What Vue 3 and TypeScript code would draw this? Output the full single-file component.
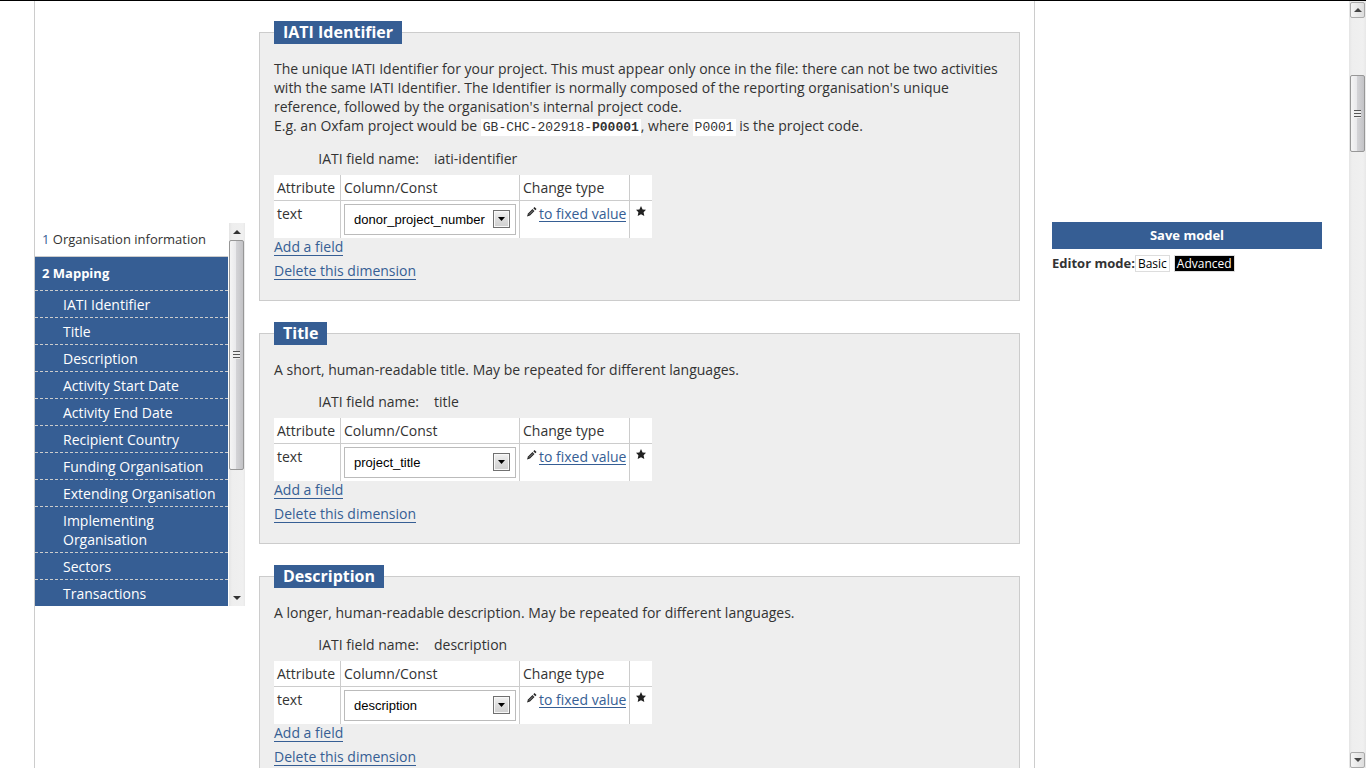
<script setup lang="ts">
import { ref } from 'vue'

interface Dimension {
  id: string
  title: string
  description: string
  field: string
}

const steps: string[] = [
  'IATI Identifier',
  'Title',
  'Description',
  'Activity Start Date',
  'Activity End Date',
  'Recipient Country',
  'Funding Organisation',
  'Extending Organisation',
  'Implementing Organisation',
  'Sectors',
  'Transactions',
]

const dimensions: Dimension[] = [
  {
    id: 'identifier',
    title: 'IATI Identifier',
    description:
      "The unique IATI Identifier for your project. This must appear only once in the file: there can not be two activities with the same IATI Identifier. The Identifier is normally composed of the reporting organisation's unique reference, followed by the organisation's internal project code.",
    field: 'iati-identifier',
  },
  {
    id: 'title',
    title: 'Title',
    description: 'A short, human-readable title. May be repeated for different languages.',
    field: 'title',
  },
  {
    id: 'description',
    title: 'Description',
    description: 'A longer, human-readable description. May be repeated for different languages.',
    field: 'description',
  },
]

const columns: string[] = ['donor_project_number', 'project_title', 'description']
const chosen = ref<string[]>([...columns])
const mode = ref<'Basic' | 'Advanced'>('Advanced')
</script>

<template>
  <div class="page">
    <div class="frame">
      <aside class="side">
        <nav class="steps" aria-label="Steps">
          <a class="step" href="#organisation"><span class="num">1</span> Organisation information</a>
          <a class="step current" href="#mapping">2 Mapping</a>
          <ul class="substeps">
            <li v-for="s in steps" :key="s"><a href="#mapping">{{ s }}</a></li>
          </ul>
        </nav>
        <div class="bar inner" aria-hidden="true">
          <span class="cap"><svg width="8" height="4" viewBox="0 0 8 4"><path d="M0 4L4 0L8 4Z" fill="#333" /></svg></span>
          <span class="thumb"><i class="grip"></i></span>
          <span class="cap end"><svg width="8" height="4" viewBox="0 0 8 4"><path d="M0 0L4 4L8 0Z" fill="#333" /></svg></span>
        </div>
      </aside>

      <main class="content">
        <fieldset v-for="(d, i) in dimensions" :key="d.id" class="dimension">
          <legend>{{ d.title }}</legend>
          <p class="about">{{ d.description }}</p>
          <p v-if="d.id === 'identifier'" class="example">
            E.g. an Oxfam project would be <code>GB-CHC-202918-<b>P00001</b></code>, where <code>P0001</code> is the project code.
          </p>
          <dl class="field">
            <dt>IATI field name:</dt>
            <dd>{{ d.field }}</dd>
          </dl>
          <table>
            <thead>
              <tr>
                <th class="c-attr">Attribute</th>
                <th class="c-col">Column/Const</th>
                <th class="c-type">Change type</th>
                <th class="c-star"></th>
              </tr>
            </thead>
            <tbody>
              <tr>
                <td><label :for="'col-' + d.id">text</label></td>
                <td class="pick">
                  <div class="select">
                    <select :id="'col-' + d.id" v-model="chosen[i]">
                      <option v-for="c in columns" :key="c" :value="c">{{ c }}</option>
                    </select>
                    <span class="arrow"><svg width="7" height="4" viewBox="0 0 7 4"><path d="M0 0H7L3.5 4Z" fill="#000" /></svg></span>
                  </div>
                </td>
                <td>
                  <span class="change">
                    <svg width="16" height="16" viewBox="0 0 16 16" aria-hidden="true">
                      <path d="M4 12.5L5 9.5L9.5 5L11.5 7L7 11.5Z" fill="#222" />
                      <path d="M10.3 4.2L11.5 3L13.5 5L12.3 6.2Z" fill="#222" />
                      <path d="M6 10.5L10 6.5" stroke="#aaa" stroke-width="0.8" />
                    </svg>
                    <a href="#fixed">to fixed value</a>
                  </span>
                </td>
                <td class="star">
                  <svg width="16" height="16" viewBox="0 0 16 16" aria-label="Required">
                    <path d="M8 2L9.6 5.4L13 5.8L10.6 8.2L11.3 12L8 10.3L4.7 12L5.4 8.2L3 5.8L6.4 5.4Z" fill="#222" />
                  </svg>
                </td>
              </tr>
            </tbody>
          </table>
          <div class="action"><a href="#add">Add a field</a></div>
          <div class="action"><a href="#delete">Delete this dimension</a></div>
        </fieldset>
      </main>
    </div>

    <aside class="tools">
      <button class="save" type="button">Save model</button>
      <div class="mode">
        <strong>Editor mode:</strong>
        <button type="button" :class="{ on: mode === 'Basic' }" @click="mode = 'Basic'">Basic</button>
        <button type="button" :class="{ on: mode === 'Advanced' }" @click="mode = 'Advanced'">Advanced</button>
      </div>
    </aside>

    <div class="bar outer" aria-hidden="true">
      <span class="cap"><svg width="8" height="4" viewBox="0 0 8 4"><path d="M0 4L4 0L8 4Z" fill="#444" /></svg></span>
      <span class="thumb"><i class="grip"></i></span>
      <span class="cap end"><svg width="8" height="4" viewBox="0 0 8 4"><path d="M0 0L4 4L8 0Z" fill="#444" /></svg></span>
    </div>
  </div>
</template>

<style>
html,
body {
  margin: 0;
  background: #fff;
}
</style>

<style scoped>
* {
  box-sizing: border-box;
}

.page {
  display: flex;
  height: 100vh;
  overflow: hidden;
  border-top: 1px solid #000;
  padding-left: 34px;
  font: 14px/19px "Open Sans", "Noto Sans", sans-serif;
  color: #333;
}

.frame {
  flex: 1;
  min-width: 0;
  display: flex;
  border-left: 1px solid #ccc;
  border-right: 1px solid #ccc;
}

.side {
  flex: none;
  display: flex;
  width: 210px;
  height: 383px;
  margin-top: 222px;
}

.steps {
  width: 193px;
  overflow: hidden;
  margin-right: 1px;
  background: #365e94;
}

.step {
  display: block;
  height: 34px;
  padding: 7px 7px;
  background: #fff;
  color: #333;
  border-bottom: 1px solid #ccc;
  font-size: 13px;
  white-space: nowrap;
  text-decoration: none;
}

.num {
  color: #365e94;
}

.current {
  height: 33px;
  background: #365e94;
  border: 0;
  color: #fff;
  font-weight: bold;
}

.substeps {
  list-style: none;
  margin: 0;
  padding: 0;
}

.substeps li {
  border-top: 1px dashed #ccc;
  padding: 4px 12px 3px 28px;
}

.substeps a {
  color: #fff;
  text-decoration: none;
}

.bar {
  flex: none;
  display: flex;
  flex-direction: column;
  background: linear-gradient(90deg, #e4e4e4, #eee 3px, #f0f0f0 14px, #e8e8e8);
}

.cap {
  display: flex;
  align-items: center;
  justify-content: center;
  height: 17px;
}

.end {
  margin-top: auto;
}

.thumb {
  display: flex;
  align-items: center;
  justify-content: center;
  border: 1px solid #979797;
  border-radius: 2px;
  background: linear-gradient(90deg, #f5f5f5, #e9e9eb 45%, #d3d3d6 50%, #c3c3c6);
}

.grip {
  width: 7px;
  height: 8px;
  background: repeating-linear-gradient(#555 0 1px, #eee 1px 3px);
}

.inner {
  width: 16px;
}

.inner .thumb {
  height: 230px;
  margin-right: 1px;
}

.outer {
  width: 17px;
  padding: 1px 1px 0;
}

.outer .cap {
  height: 16px;
  border: 1px solid #aaa;
  border-radius: 2px;
  background: linear-gradient(90deg, #f5f5f5, #ddd);
}

.outer .thumb {
  height: 77px;
  margin-top: 57px;
}

.content {
  flex: 1;
  min-width: 0;
  padding: 20px 14px 0;
}

.dimension {
  min-width: 0;
  margin: 0 0 21px;
  padding: 0 14px 19px;
  border: 1px solid #ccc;
  background: #eee;
}

legend {
  height: 23px;
  margin-bottom: 15px;
  padding: 0 9px;
  background: #365e94;
  color: #fff;
  font-size: 16px;
  font-weight: bold;
  line-height: 23px;
}

.about,
.example {
  margin: 0;
}

.example {
  margin-bottom: 14px;
}

code {
  padding: 1px 2px;
  background: #fff;
  font: 13px/15px "Liberation Mono", monospace;
}

.field {
  display: grid;
  grid-template-columns: 145px 1fr;
  column-gap: 15px;
  margin: 13px 0 7px;
}

.field dt {
  text-align: right;
}

.field dd {
  margin: 0;
}

table {
  table-layout: fixed;
  width: 378px;
  border-spacing: 0;
  background: #fff;
}

th,
td {
  padding: 3px;
  border-right: 1px solid #ccc;
  font-weight: normal;
  text-align: left;
  vertical-align: top;
  white-space: nowrap;
}

th {
  height: 26px;
  border-bottom: 1px solid #ccc;
}

th:last-child,
td:last-child {
  border-right: 0;
}

.c-attr {
  width: 67px;
}

.c-col {
  width: 179px;
}

.c-type {
  width: 110px;
}

.select {
  position: relative;
}

select {
  display: block;
  width: 100%;
  height: 31px;
  padding: 0 24px 0 9px;
  border: 1px solid #bbb;
  border-radius: 0;
  appearance: none;
  background: #fff;
  color: #000;
  font: 13px "Liberation Sans", Arial, sans-serif;
}

.arrow {
  position: absolute;
  top: 6px;
  right: 6px;
  display: flex;
  align-items: center;
  justify-content: center;
  width: 17px;
  height: 18px;
  border: 1px solid #707070;
  background: linear-gradient(#f2f2f2, #ddd 50%, #cfcfcf);
  box-shadow: inset 0 0 0 1px #f8f8f8;
  pointer-events: none;
}

.change {
  display: flex;
}

.change svg {
  flex: none;
}

.dimension a {
  height: 18px;
  line-height: 18px;
  border-bottom: 1px solid #365e94;
  color: #365e94;
  text-decoration: none;
}

.change a {
  line-height: 19px;
}

.star svg {
  display: block;
}

.action a {
  display: inline-block;
  vertical-align: top;
}

.action {
  height: 19px;
}

.action + .action {
  margin-top: 5px;
}

.tools {
  flex: none;
  width: 314px;
  padding: 221px 27px 0 17px;
}

.save {
  display: block;
  width: 100%;
  height: 27px;
  padding: 0;
  border: 0;
  background: #365e94;
  color: #fff;
  font: bold 13px/27px "Open Sans", "Noto Sans", sans-serif;
}

.mode {
  display: flex;
  align-items: center;
  margin-top: 5px;
  font-size: 13px;
}

.mode button {
  height: 17px;
  margin-right: 4px;
  padding: 0 2px;
  border: 1px solid #ddd;
  background: #fff;
  color: #000;
  font: 12px/15px "Open Sans", "Noto Sans", sans-serif;
}

.mode button.on {
  background: #000;
  color: #fff;
}
</style>
